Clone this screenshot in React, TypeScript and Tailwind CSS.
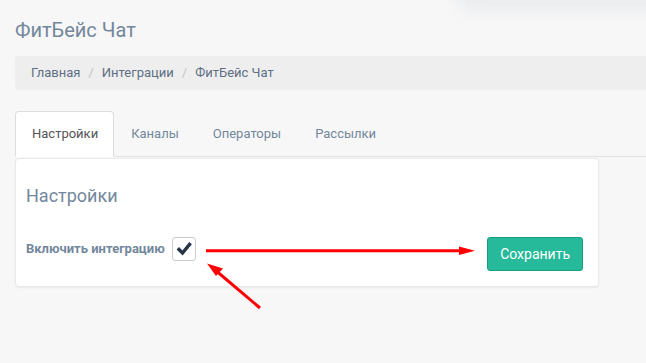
export default function App() {
  const tabs = ["Настройки", "Каналы", "Операторы", "Рассылки"];
  return (
    <div
      className="relative w-[646px] h-[363px] overflow-hidden bg-[#f7f7f7] text-[#73879c]"
      style={{ fontFamily: "Roboto, 'Liberation Sans', Arial, sans-serif" }}
    >
      <div className="absolute -top-[20px] right-[-40px] w-[230px] h-[30px] rounded-full bg-[#e6e8ec] blur-[8px] opacity-80" />

      <div className="relative pt-[17px] pl-[15px] text-[20px] leading-[26px]">ФитБейс Чат</div>

      <div className="relative mt-[13px] ml-[15px] h-[34px] bg-[#eeeeee] rounded-l-[4px] flex items-center pl-[16px] text-[13px] text-[#5d6f83]">
        <span>Главная</span>
        <span className="mx-[8px] text-[#c4c4c4]">/</span>
        <span>Интеграции</span>
        <span className="mx-[8px] text-[#c4c4c4]">/</span>
        <span>ФитБейс Чат</span>
      </div>

      <div className="relative mt-[21px] ml-[15px] flex border-b border-[#e1e1e1] h-[46px]">
        {tabs.map((t, i) =>
          i === 0 ? (
            <div
              key={t}
              className="h-[46px] pl-[16px] pr-[15px] flex items-center bg-white border border-[#dddddd] border-b-white rounded-t-[4px] text-[13px] text-[#555555]"
            >
              {t}
            </div>
          ) : (
            <div key={t} className="h-[45px] px-[17px] flex items-center text-[13px] text-[#73879c]">
              {t}
            </div>
          )
        )}
      </div>

      <div className="relative mt-[1px] ml-[15px] w-[584px] bg-white border border-[#e6e9ed] rounded-[4px] shadow-[0_1px_2px_rgba(0,0,0,0.06)] pt-[25px] pl-[10px] pr-[15px] pb-[15px]">
        <div className="text-[18px] leading-[24px] text-[#73879c]">Настройки</div>
        <div className="mt-[29px] flex items-start">
          <div className="mt-[4px] text-[13px] leading-[16px] font-bold text-[#73879c]">Включить интеграцию</div>
          <div className="ml-[7px] w-[24px] h-[24px] border border-[#cccccc] rounded-[3px] bg-white flex items-center justify-center">
            <svg width="16" height="14" viewBox="0 0 16 14">
              <path d="M3 7.5 L6.5 11 L13.5 2.5" fill="none" stroke="#263445" strokeWidth="3.4" strokeLinecap="square" />
            </svg>
          </div>
          <button className="ml-auto h-[34px] px-[12px] bg-[#26b99a] border border-[#169f85] rounded-[3px] text-white text-[14px]">
            Сохранить
          </button>
        </div>
      </div>

      <svg className="absolute left-0 top-0 pointer-events-none" width="646" height="363">
        <line x1="206" y1="250.7" x2="461" y2="250.7" stroke="#ff0000" strokeWidth="3" />
        <polygon points="459,246.5 475,250.7 459,255" fill="#ff0000" />
        <line x1="260" y1="308" x2="214" y2="269" stroke="#ff0000" strokeWidth="3" />
        <polygon points="207,263.5 223,268.5 216,276" fill="#ff0000" />
      </svg>
    </div>
  );
}
